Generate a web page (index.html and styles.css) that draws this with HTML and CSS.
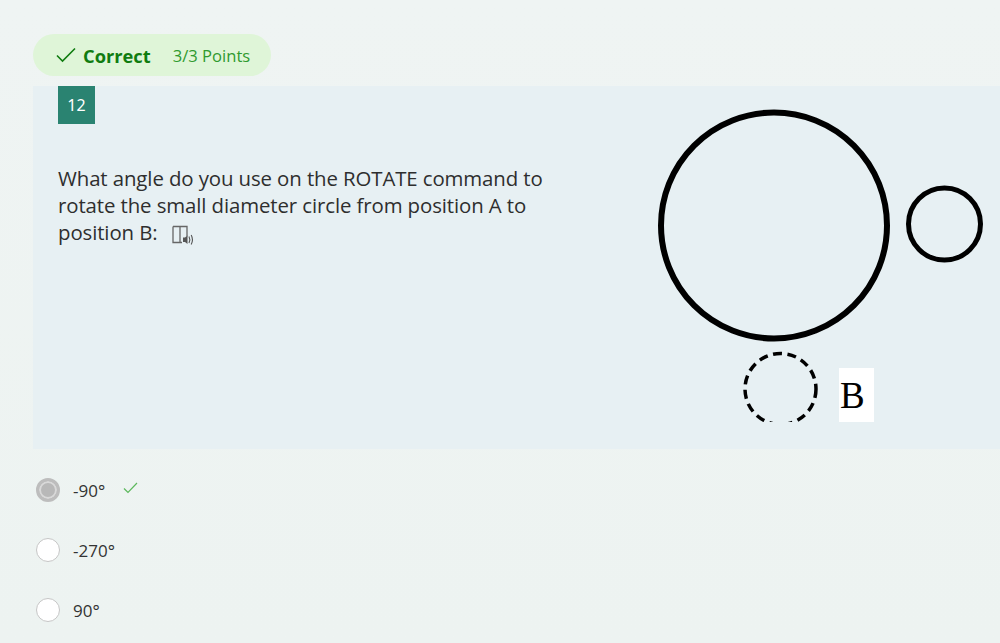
FILE: index.html
```html
<!DOCTYPE html>
<html>
<head>
<meta charset="utf-8">
<link rel="stylesheet" href="styles.css">
</head>
<body>
<div class="page">
  <div class="status">
    <svg class="status-check" width="20" height="16" viewBox="0 0 20 16"><path d="M1 8.5 L6.5 14 L19 1.5" fill="none" stroke="#107c10" stroke-width="1.6"/></svg>
    <span class="status-label">Correct</span>
    <span class="status-points">3/3 Points</span>
  </div>
  <div class="card">
    <div class="card-text">
      <div class="qnum">12</div>
      <div class="question">What angle do you use on the ROTATE command to rotate the small diameter circle from position A to position B:<span class="reader"><svg width="24" height="22" viewBox="0 0 24 22"><path d="M2 2.5 H16 V12.5 M2 2.5 V18.5 H11 M9 2.5 V18.5" fill="none" stroke="#666" stroke-width="1.3"/><path d="M12 13.5 H14 L16.5 11.5 V20 L14 18 H12 Z" fill="#555"/><path d="M18 12.5 Q19.6 15.7 18 19 M20.2 11 Q22.7 15.7 20.2 20.5" fill="none" stroke="#555" stroke-width="1.1"/></svg></span></div>
    </div>
    <svg class="figure" width="360" height="336" viewBox="0 0 360 336">
      <circle cx="134" cy="139.5" r="113" fill="none" stroke="#000" stroke-width="6"/>
      <circle cx="304.5" cy="138" r="36" fill="none" stroke="#000" stroke-width="5"/>
      <circle cx="140.5" cy="303" r="35.5" fill="none" stroke="#000" stroke-width="3.5" stroke-dasharray="9 5.5"/>
      <rect x="199" y="282" width="35" height="54" fill="#fff"/>
      <text x="200" y="322" class="fig-label">B</text>
    </svg>
  </div>
  <div class="options">
    <div class="option">
      <span class="radio radio-on"></span>
      <span class="opt-text">-90°</span>
      <svg class="opt-check" width="15" height="12" viewBox="0 0 15 12"><path d="M1 6.5 L5 10.5 L14 1" fill="none" stroke="#5cb85c" stroke-width="1.2"/></svg>
    </div>
    <div class="option">
      <span class="radio"></span>
      <span class="opt-text">-270°</span>
    </div>
    <div class="option">
      <span class="radio"></span>
      <span class="opt-text">90°</span>
    </div>
  </div>
</div>
</body>
</html>
```

FILE: styles.css
```css
html, body {
  margin: 0;
  padding: 0;
}
body {
  background: linear-gradient(180deg, #eff4f3 0%, #edf3f1 100%);
  font-family: "Open Sans", "Noto Sans", sans-serif;
  color: #333;
  height: 643px;
  overflow: hidden;
}
.page {
  padding: 34px 0 0 33px;
}
.status {
  display: inline-flex;
  align-items: center;
  height: 42px;
  width: 238px;
  box-sizing: border-box;
  padding-left: 23px;
  border-radius: 21px;
  background: #dff5d8;
}
.status-check {
  margin-right: 7px;
}
.status-label {
  font-weight: 700;
  font-size: 18.3px;
  color: #107c10;
  margin-right: 22px;
}
.status-points {
  font-size: 16.6px;
  color: #2f9a2f;
}
.card {
  margin-top: 10px;
  height: 363px;
  background: #e7f0f3;
  display: flex;
  justify-content: space-between;
  overflow: hidden;
}
.card-text {
  padding-left: 25px;
  width: 492px;
}
.qnum {
  width: 37px;
  height: 38px;
  background: #2a8371;
  color: #fff;
  font-size: 16px;
  display: flex;
  align-items: center;
  justify-content: center;
  font-family: "Noto Sans", "Open Sans", sans-serif;
}
.question {
  margin-top: 41px;
  font-size: 20.4px;
  line-height: 27px;
  color: #2e2e2e;
  letter-spacing: -0.1px;
}
.reader {
  display: inline-block;
  vertical-align: -6px;
  margin-left: 13px;
}
.figure {
  flex: none;
  display: block;
}
.fig-label {
  font-family: "Liberation Serif", "Times New Roman", serif;
  font-size: 37px;
  fill: #000;
}
.options {
  display: flex;
  flex-direction: column;
  padding-top: 29px;
}
.option {
  display: flex;
  align-items: center;
  height: 24px;
  margin-bottom: 36px;
  margin-left: 3px;
}
.radio {
  width: 24px;
  height: 24px;
  box-sizing: border-box;
  border-radius: 50%;
  border: 1px solid #c6c6c6;
  background: #fff;
  margin-right: 13px;
}
.radio-on {
  border: 3px solid #bdbdbd;
  background: #b8b8b8;
  box-shadow: inset 0 0 0 2px #d9d9d9;
}
.opt-text {
  font-size: 17px;
  color: #333;
}
.opt-check {
  margin-left: 18px;
  margin-top: -4px;
}
```
